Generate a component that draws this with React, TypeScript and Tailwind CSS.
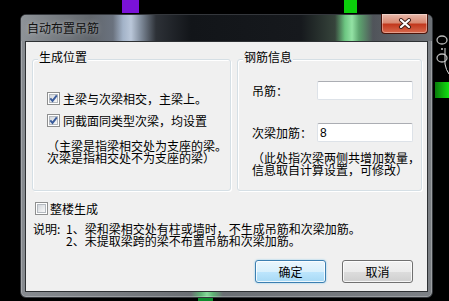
import type { ReactNode } from 'react'

function CheckBox({ checked = false }: { checked?: boolean }) {
  return (
    <span className="flex h-[13px] w-[13px] shrink-0 items-center justify-center border border-[#8e8f8f] bg-white p-[1px]">
      <span className="flex h-full w-full items-center justify-center border border-[#b4b9bf] bg-[linear-gradient(135deg,#d3d7dc,#f8f8f8)]">
        {checked && (
          <svg width="9" height="9" viewBox="0 0 9 9" className="shrink-0">
            <path d="M1.3 4.4 L3.5 6.9 L7.8 1.3" fill="none" stroke="#3a5c9c" strokeWidth="1.9" />
          </svg>
        )}
      </span>
    </span>
  )
}

function GroupBox({ title, className, children }: { title: string; className: string; children: ReactNode }) {
  return (
    <div className={`relative rounded-[3px] border border-[#d5dfe5] shadow-[inset_1px_1px_0_#ffffff,1px_1px_0_#ffffff] ${className}`}>
      <span className="absolute -top-[10px] left-[5px] bg-[#f0f0f0] px-[1px] leading-[14px]">{title}</span>
      {children}
    </div>
  )
}

function TextBox({ value = '' }: { value?: string }) {
  return (
    <div className="flex h-[19px] w-[96px] items-center rounded-[2px] border border-[#dde2e8] border-t-[#abadb3] bg-white pl-[2px] font-['Liberation_Sans',sans-serif] text-[12px]">
      {value}
    </div>
  )
}

export default function App() {
  return (
    <div className="relative h-[301px] w-[449px] overflow-hidden bg-black pl-[20px] pt-[14px] font-['Noto_Sans_CJK_SC','Noto_Sans',sans-serif] text-[12px] text-black">
      {/* desktop bits behind the dialog */}
      <div className="absolute left-[122px] top-0 h-[13px] w-[17px] bg-[#7a12d8]" />
      <div className="absolute left-[344px] top-0 h-[13px] w-[13px] bg-[#0bcf0b]" />
      <div className="absolute left-[435px] top-[82px] h-[16px] w-[14px] bg-[linear-gradient(90deg,#0a7a0a,#12e312)]" />
      <div className="absolute left-[198px] top-[298px] h-[3px] w-[15px] bg-[#0e8a2c]" />
      <svg className="absolute left-[434px] top-[34px]" width="15" height="44" viewBox="0 0 15 44">
        <ellipse cx="8" cy="6" rx="5" ry="4" fill="none" stroke="#b8b8b8" strokeWidth="1.3" />
        <circle cx="8" cy="15" r="1" fill="#c8c8c8" />
        <ellipse cx="8" cy="24" rx="5" ry="4" fill="none" stroke="#b8b8b8" strokeWidth="1.3" />
        <path d="M11 14 L11 30 Q12 36 15 40" fill="none" stroke="#e0e0e0" strokeWidth="1" />
      </svg>

      {/* window */}
      <div className="flex h-[284px] w-[413px] flex-col rounded-[6px] border border-[#34373c] bg-[linear-gradient(90deg,#878b90_0px,#6b6f74_170px,#5fb575_180px,#86d99a_186px,#5fb575_192px,#6b6f74_202px,#7c8085_100%)] px-[4px] pb-[5px] shadow-[inset_0_0_0_1px_rgba(255,255,255,0.25)]">
        <div className="-mx-[4px] flex h-[26px] items-start justify-between rounded-t-[5px] bg-[linear-gradient(90deg,#8e9398_0px,#62676d_70px,#6a727e_92px,#a3b3c8_102px,#bac7d9_110px,#8490a0_119px,#2d3137_135px,#121519_170px,#16191d_280px,#36443b_314px,#6cc681_324px,#93e2a4_331px,#5da56f_338px,#50545a_352px,#6d7176_100%)] pl-[6px]">
          <span className="mt-[5px] leading-[16px] text-[#111] [text-shadow:0_0_5px_rgba(255,255,255,0.45)]">自动布置吊筋</span>
          <div className="-mt-[1px] mr-[4px] flex h-[20px] w-[47px] items-center justify-center rounded-b-[4px] border border-t-0 border-[#4a140a] bg-[linear-gradient(180deg,#e7b9ac_0%,#d98a73_45%,#c2391e_55%,#d86a4e_100%)] shadow-[inset_0_0_0_1px_rgba(255,255,255,0.35)]">
            <svg width="14" height="11" viewBox="0 0 14 11">
              <path d="M3 2 L11 9 M11 2 L3 9" stroke="#3a1a14" strokeWidth="4" strokeLinecap="round" />
              <path d="M3 2 L11 9 M11 2 L3 9" stroke="#ffffff" strokeWidth="2.2" strokeLinecap="round" />
            </svg>
          </div>
        </div>

        <div className="flex flex-1 flex-col border border-[#2e3134] bg-[#f0f0f0]">
          <div className="mt-[17px] flex gap-[6px] pl-[6px]">
            <GroupBox title="生成位置" className="h-[132px] w-[199px] pl-[14px] pt-[32px]">
              <div className="flex h-[13px] items-center gap-[3px] leading-[13px]">
                <CheckBox checked />
                <span className="whitespace-nowrap">主梁与次梁相交，主梁上。</span>
              </div>
              <div className="mt-[9px] flex h-[13px] items-center gap-[3px] leading-[13px]">
                <CheckBox checked />
                <span className="whitespace-nowrap">同截面同类型次梁，均设置</span>
              </div>
              <div className="mt-[13px] whitespace-nowrap leading-[12px]">
                <div>（主梁是指梁相交处为支座的梁。</div>
                <div>次梁是指相交处不为支座的梁）</div>
              </div>
            </GroupBox>
            <GroupBox title="钢筋信息" className="h-[132px] w-[185px] pl-[14px] pt-[21px]">
              <div className="flex items-center">
                <span className="w-[65px]">吊筋：</span>
                <TextBox />
              </div>
              <div className="mt-[23px] flex items-center">
                <span className="w-[65px] whitespace-nowrap">次梁加筋：</span>
                <TextBox value="8" />
              </div>
              <div className="mt-[10px] whitespace-nowrap leading-[12px]">
                <div>（此处指次梁两侧共增加数量，</div>
                <div>信息取自计算设置，可修改）</div>
              </div>
            </GroupBox>
          </div>

          <div className="mt-[11px] flex h-[13px] items-center gap-[2px] pl-[9px] leading-[13px]">
            <CheckBox />
            <span>整楼生成</span>
          </div>

          <div className="mt-[8px] flex whitespace-nowrap pl-[7px] leading-[12px]">
            <span className="w-[33px]">说明:</span>
            <div>
              <div>1、梁和梁相交处有柱或墙时，不生成吊筋和次梁加筋。</div>
              <div>2、未提取梁跨的梁不布置吊筋和次梁加筋。</div>
            </div>
          </div>

          <div className="mt-[13px] flex justify-end gap-[16px] pr-[14px]">
            <button className="flex h-[23px] w-[71px] items-center justify-center rounded-[3px] border border-[#3c7fb1] bg-[linear-gradient(180deg,#eaf6fd_0%,#d9f0fc_50%,#bee6fd_50%,#a7d9f5_100%)] shadow-[inset_0_0_0_1px_rgba(255,255,255,0.8),0_0_2px_#7ec4ea]">
              确定
            </button>
            <button className="flex h-[23px] w-[71px] items-center justify-center rounded-[3px] border border-[#707070] bg-[linear-gradient(180deg,#f2f2f2_0%,#ebebeb_50%,#dddddd_50%,#cfcfcf_100%)] shadow-[inset_0_0_0_1px_rgba(255,255,255,0.8)]">
              取消
            </button>
          </div>
        </div>
      </div>
    </div>
  )
}
